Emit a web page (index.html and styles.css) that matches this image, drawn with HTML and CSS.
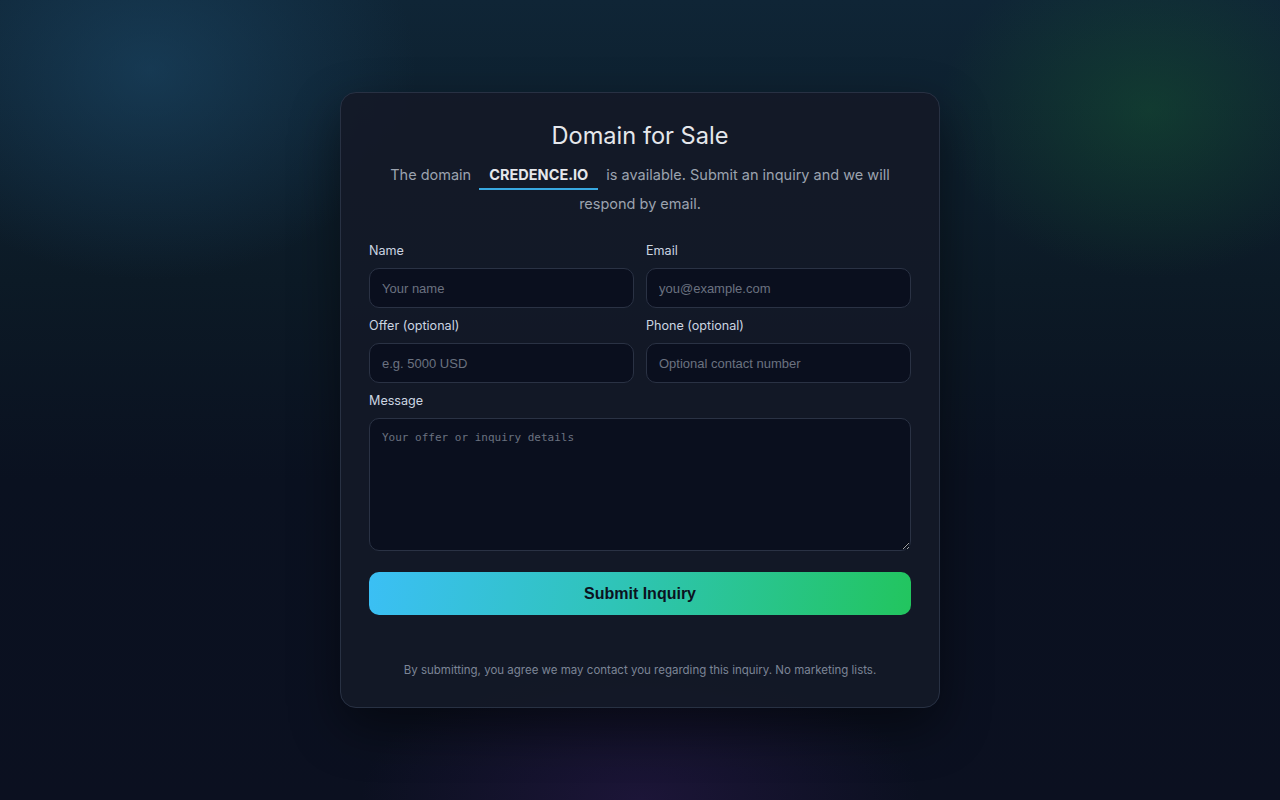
FILE: index.html
```html
<!DOCTYPE html>
<html lang="en">
<head>
  <meta charset="UTF-8">
  <title>Domain for Sale</title>
  <link rel="stylesheet" href="styles.css">
  <meta name="viewport" content="width=device-width, initial-scale=1">
</head>
<body>

  <main class="card">
    <h1>Domain for Sale</h1>
    <p class="lead">The domain <span class="domain">CREDENCE.IO</span> is available. Submit an inquiry and we will respond by email.</p>

    <form class="inquiry" onsubmit="return false;">
      <div class="grid">
        <div class="field">
          <label for="name">Name</label>
          <input type="text" id="name" placeholder="Your name" />
        </div>
        <div class="field">
          <label for="email">Email</label>
          <input type="email" id="email" placeholder="you@example.com" />
        </div>
        <div class="field">
          <label for="offer">Offer (optional)</label>
          <input type="text" id="offer" placeholder="e.g. 5000 USD" />
        </div>
        <div class="field">
          <label for="phone">Phone (optional)</label>
          <input type="text" id="phone" placeholder="Optional contact number" />
        </div>
        <div class="field full">
          <label for="message">Message</label>
          <textarea id="message" placeholder="Your offer or inquiry details"></textarea>
        </div>
      </div>

      <button type="submit" class="submit">Submit Inquiry</button>
    </form>

    <p class="note">By submitting, you agree we may contact you regarding this inquiry. No marketing lists.</p>
  </main>

</body>
</html>
```

FILE: styles.css
```css
* {
  box-sizing: border-box;
}
html, body {
  height: 100%;
}
body {
  margin: 0;
  font-family: Inter, 'Noto Sans', sans-serif;
  color: #e5e7eb;
  background:
    radial-gradient(ellipse 380px 300px at 150px 70px, rgba(30, 80, 115, 0.5), transparent 70%),
    radial-gradient(ellipse 300px 240px at 1150px 110px, rgba(22, 90, 50, 0.45), transparent 70%),
    radial-gradient(ellipse 400px 200px at 640px 800px, rgba(60, 30, 100, 0.35), transparent 70%),
    linear-gradient(180deg, #0f2536 0%, #0c1a26 35%, #0a1120 60%, #0b1020 100%);
  display: flex;
  justify-content: center;
  align-items: flex-start;
  padding-top: 92px;
}

.card {
  width: 600px;
  padding: 28px;
  background: rgba(19, 25, 39, 0.92);
  border: 1px solid #283143;
  border-radius: 16px;
  box-shadow: 0 20px 50px rgba(0, 0, 0, 0.45);
}

h1 {
  margin: 0;
  font-size: 23.6px;
  line-height: 29px;
  font-weight: 400;
  text-align: center;
  color: #e5e7eb;
}

.lead {
  margin: 11px 0 0;
  font-size: 14.5px;
  line-height: 28px;
  color: #9ca3af;
  text-align: center;
}
.domain {
  display: inline-block;
  margin: 0 4px;
  padding: 0 10px;
  line-height: 26px;
  font-weight: 700;
  color: #e5e7eb;
  border-bottom: 2px solid #38a8e0;
}

.inquiry {
  margin-top: 24px;
}
.grid {
  display: grid;
  grid-template-columns: 1fr 1fr;
  column-gap: 12px;
  row-gap: 9px;
}
.field {
  display: flex;
  flex-direction: column;
  gap: 8px;
}
.field.full {
  grid-column: 1 / -1;
}
label {
  font-size: 12.6px;
  line-height: 18px;
  color: #cbd5e1;
}
input, textarea {
  width: 100%;
  background: #0a0f1e;
  border: 1px solid #2a3244;
  border-radius: 10px;
  color: #e5e7eb;
  padding: 0 12px;
  outline: none;
}
input {
  height: 40px;
  font-size: 13px;
}
textarea {
  height: 133px;
  padding: 12px;
  font-family: 'DejaVu Sans Mono', monospace;
  font-size: 11px;
  resize: vertical;
}
input::placeholder, textarea::placeholder {
  color: #6b7280;
}

.submit {
  display: block;
  width: 100%;
  height: 43px;
  margin-top: 21px;
  border: 0;
  border-radius: 10px;
  background: linear-gradient(100deg, #3bbff5 0%, #2fc4b8 45%, #22c55e 100%);
  color: #0b1220;
  font-size: 16px;
  font-weight: 700;
  cursor: pointer;
}

.note {
  margin: 46px 0 0;
  font-size: 11.5px;
  line-height: 18px;
  color: #7c8596;
  text-align: center;
}
```
